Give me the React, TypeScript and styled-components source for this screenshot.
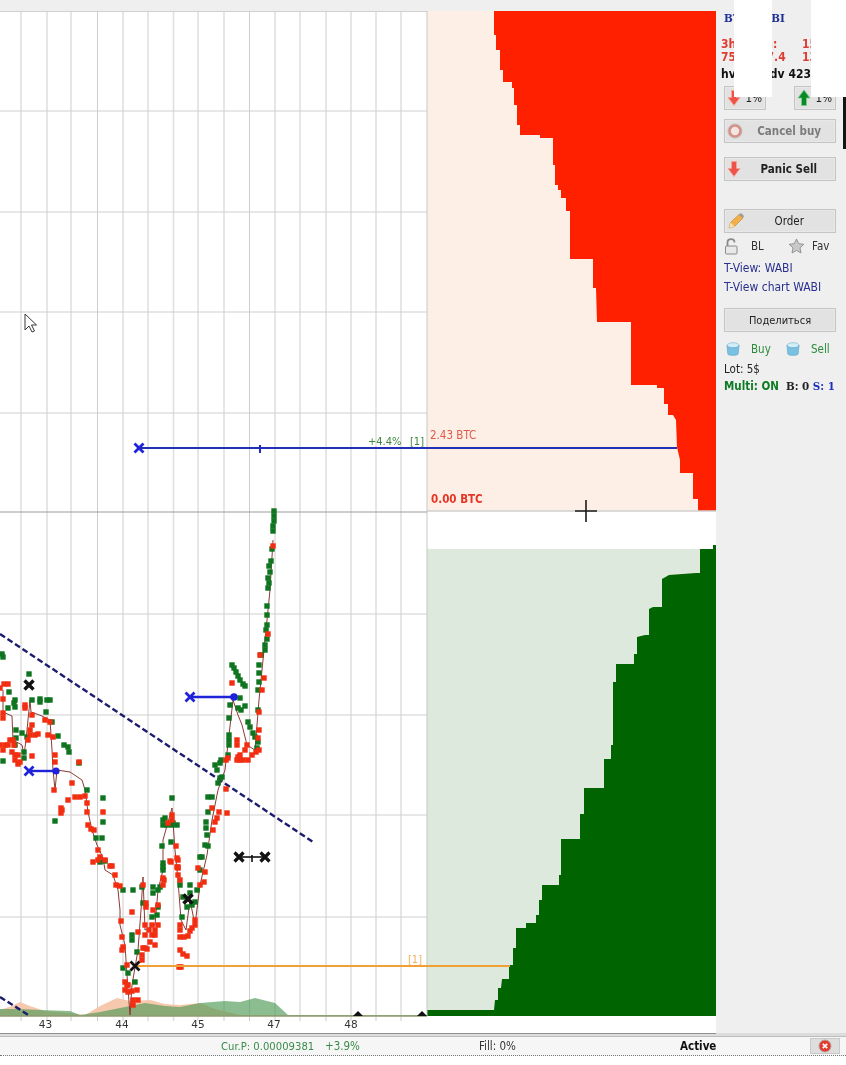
import React from "react";
import styled, { createGlobalStyle } from "styled-components";

const Global = createGlobalStyle`
  html, body { margin: 0; padding: 0; background: #fff; }
  * { box-sizing: border-box; }
`;

const UI = `"DejaVu Sans Condensed", "DejaVu Sans", "Noto Sans", sans-serif`;
const SERIF = `"DejaVu Serif Condensed", "DejaVu Serif", serif`;

const Page = styled.div`
  position: relative;
  width: 846px;
  height: 1065px;
  overflow: hidden;
  display: flex;
  flex-direction: column;
  font-family: ${UI};
  font-size: 11px;
  filter: blur(0.4px);
`;
const Main = styled.div`
  display: flex;
  height: 1033px;
`;
const ChartColumn = styled.div`
  width: 716px;
  display: flex;
  flex-direction: column;
  background: #fff;
`;
const TopStrip = styled.div`
  height: 11px;
  background: #efefef;
`;
const ChartSvg = styled.svg`
  display: block;
  width: 716px;
  height: 1022px;
`;
const Sidebar = styled.aside`
  width: 130px;
  background: #efefef;
  padding: 11px 10px 0 8px;
  display: flex;
  flex-direction: column;
`;
const PairTitle = styled.div`
  color: #1c2f97;
  font: bold 11.5px/14px ${SERIF};
`;
const StatRow = styled.div<{ $color: string; $top: number }>`
  display: flex;
  justify-content: space-between;
  margin: ${(p) => p.$top}px -10px 0 -3px;
  color: ${(p) => p.$color};
  font: bold 12px/13px "DejaVu Sans Condensed", "DejaVu Sans", sans-serif;
  white-space: nowrap;
  overflow: hidden;
`;
const StatRight = styled.span`
  width: 44px;
`;
const NudgeRow = styled.div`
  display: flex;
  justify-content: space-between;
  margin-top: 5px;
`;
const Button = styled.div<{ $top?: number; $w?: number; $bold?: boolean; $color?: string; $pad?: number }>`
  height: 24px;
  width: ${(p) => p.$w ?? 112}px;
  margin-top: ${(p) => p.$top ?? 0}px;
  background: #e2e2e2;
  border: 1px solid #c4c4c4;
  box-shadow: inset 0 0 0 1px #e8e8e8;
  display: flex;
  align-items: center;
  justify-content: space-between;
  padding: 0 ${(p) => p.$pad ?? 14}px 0 2px;
  color: ${(p) => p.$color ?? "#222"};
  font-size: 11.5px;
  font-weight: ${(p) => (p.$bold ? 700 : 400)};
`;
const CenterButton = styled(Button)`
  justify-content: center;
  padding: 0;
  font-size: 11px;
`;
const ToolRow = styled.div<{ $top: number }>`
  display: flex;
  align-items: center;
  height: 16px;
  margin-top: ${(p) => p.$top}px;
  color: #3a3a3a;
`;
const ToolLabel = styled.span<{ $w: number; $color?: string; $indent: number }>`
  width: ${(p) => p.$w}px;
  padding-left: ${(p) => p.$indent}px;
  color: ${(p) => p.$color ?? "#333"};
  font-size: 11.5px;
`;
const IconSlot = styled.span<{ $w: number }>`
  width: ${(p) => p.$w}px;
  display: flex;
  justify-content: center;
`;
const TextLink = styled.div<{ $top: number }>`
  margin-top: ${(p) => p.$top}px;
  color: #29308f;
  line-height: 16px;
  font-size: 12px;
  white-space: nowrap;
`;
const Lot = styled.div`
  margin-top: 4px;
  color: #222;
  line-height: 16px;
  font-size: 11.5px;
`;
const MultiRow = styled.div`
  margin-top: 1px;
  display: flex;
  gap: 7px;
  font: bold 11.5px/16px "DejaVu Sans Condensed", "DejaVu Sans", sans-serif;
  white-space: nowrap;
`;
const SerifGroup = styled.span`
  font-family: ${SERIF};
`;
const Tone = styled.span<{ $c: string }>`
  color: ${(p) => p.$c};
`;
const StatusBar = styled.footer`
  height: 32px;
  background: #fff;
  display: flex;
  flex-direction: column;
`;
const StatusRail = styled.div`
  height: 4px;
  background:
    linear-gradient(#8f8f8f, #8f8f8f) 0 0 / 716px 1px no-repeat,
    linear-gradient(#dcdcdc 0 3px, #bdbdbd 3px);
`;
const StatusRow = styled.div`
  height: 19px;
  display: flex;
  align-items: center;
  padding-left: 221px;
  background: #f6f6f6;
  border-bottom: 1px dotted #777;
`;
const StatusCell = styled.span<{ $w: number; $c?: string; $bold?: boolean; $size?: number }>`
  width: ${(p) => p.$w}px;
  color: ${(p) => p.$c ?? "#333"};
  font-weight: ${(p) => (p.$bold ? 700 : 400)};
  font-size: ${(p) => p.$size ?? 11.5}px;
`;
const CloseBtn = styled.span`
  width: 30px;
  height: 16px;
  background: #dedede;
  border: 1px solid #c9c9c9;
  display: flex;
  align-items: center;
  justify-content: center;
`;
const WhitePatch = styled.div<{ $l: number; $w: number }>`
  position: absolute;
  top: 0;
  left: ${(p) => p.$l}px;
  width: ${(p) => p.$w}px;
  height: 97px;
  background: #fff;
`;
const EdgeSliver = styled.div`
  position: absolute;
  top: 97px;
  left: 843px;
  width: 3px;
  height: 52px;
  background: #141414;
`;

const gridX = [21, 47, 71, 97.5, 123, 148, 173.5, 198, 224, 249.5, 275, 300, 326, 351, 376, 401];
const gridY = [111, 212, 312, 413, 614, 715, 815, 917];

const redSteps =
  "716,11 494,11 494,35 496,35 496,50 500,50 500,70 503,70 503,82 512,82 512,88 514,88 514,105 517,105 517,125 520,125 520,135 540,135 540,138 553,138 553,165 555,165 555,185 558,185 558,190 561,190 561,198 566,198 566,211 570,211 570,259 593,259 593,288 596,288 597,322 631,322 631,385 657,385 657,388 664,388 664,404 668,404 668,415 673,415 676,420 677,447 680,460 680,473 693,473 693,499 698,499 698,511 716,511";
const greenSteps =
  "716,1016 427,1016 427,1010 494,1010 495,1000 498,1000 498,988 501,988 502,979 509,979 509,965 513,965 513,948 516,948 516,928 526,928 526,923 536,923 536,915 539,915 539,900 542,900 542,885 559,885 559,875 561,875 561,839 580,839 580,814 584,814 584,788 604,788 604,759 611,759 611,745 613,745 613,682 616,682 616,664 634,664 634,654 637,654 637,637 645,635 649,635 649,609 653,607 662,607 662,579 669,575 696,573 700,573 700,549 713,549 713,545 716,545";

const peach =
  "0,1016 0,1010 12,1006 20,1002 30,1006 45,1011 70,1013 85,1015 100,1006 117,998 130,1001 150,1000 165,1004 180,1005 200,1003 215,1009 240,1015 427,1016";
const volume =
  "0,1016 0,1009 20,1009 40,1010 70,1011 80,1015 100,1012 125,1007 145,1003 165,1006 180,1007 200,1003 225,1001 240,1002 255,998 275,1003 288,1015 427,1015 427,1016";

const green: number[][] = [
  [274,511],[274,516],[274,521],[273,526],[273,531],[272,549],[271,561],[270,572],[269,566],[268,578],[269,583],[268,588],[267,606],[267,615],[267,625],[266,630],[267,639],[265,645],[265,650],[261,655],[259,665],[259,673],[259,682],[258,690],[258,710],
  [232,665],[234,668],[236,672],[238,676],[240,680],[243,684],[245,686],[240,698],[230,705],[229,718],[238,708],[245,706],[241,710],
  [248,722],[250,727],[253,733],[255,737],[258,742],[257,748],[229,735],[229,740],[229,745],[228,755],[220,763],[217,770],[221,760],[215,765],[220,778],[218,783],[222,777],[212,797],[208,797],[208,812],[206,822],[206,828],[207,835],[205,845],[208,846],[200,857],[202,857],[200,870],
  [2,654],[3,657],[29,674],[9,692],[15,700],[15,707],[8,708],[14,703],[32,700],[40,699],[47,700],[50,700],[40,702],[46,712],[52,722],[58,736],[64,745],[68,747],[69,752],[16,730],[22,733],[27,737],[15,745],[24,752],[24,758],[3,761],[16,738],[79,763],[87,790],[103,798],[55,821],[103,822],[96,838],[102,838],[105,861],[100,862],
  [123,890],[133,890],[142,887],[153,887],[153,893],[158,890],[160,887],[163,863],[163,870],[143,903],[158,907],[157,915],[152,917],[132,935],[132,940],[137,952],[123,968],[128,973],[135,982],
  [180,885],[182,917],[190,885],[190,893],[197,890],[192,905],[187,907],[183,897],[195,902],[172,798],[163,820],[163,825],[167,825],[172,825],[173,823],[177,825],[171,842],[162,846],[163,867],[165,818],
];
const red: number[][] = [
  [273,546],[268,634],[260,655],[264,678],[262,690],[259,712],[259,730],[258,738],[259,750],[237,740],[237,745],[247,745],[245,750],[240,755],[240,760],[238,757],[237,760],[243,760],[248,760],[252,755],[256,752],[226,760],[228,758],[226,789],[219,812],[217,818],[215,822],[213,830],[212,808],[227,813],[232,683],
  [4,684],[0,688],[8,684],[3,699],[3,713],[3,718],[25,705],[25,708],[32,715],[32,725],[45,720],[50,722],[13,740],[30,735],[30,730],[28,740],[35,735],[38,734],[48,735],[53,737],[0,745],[5,745],[3,750],[8,745],[14,745],[10,740],[15,755],[18,755],[12,752],[15,760],[18,764],[20,762],[32,756],[55,755],[55,762],[54,790],[79,762],[72,783],[68,800],[61,808],[62,810],[61,813],[75,797],[80,797],[85,796],[87,803],[87,812],[103,812],[88,825],[91,829],[94,830],[98,850],[100,857],[98,860],[93,862],[105,860],[110,866],
  [112,866],[115,875],[116,885],[120,886],[143,885],[121,921],[122,937],[123,947],[122,950],[127,965],[125,982],[127,985],[125,990],[128,992],[128,985],[137,990],[132,991],[133,1000],[133,1005],[138,1000],[142,960],[145,948],[143,948],[142,955],[147,949],[145,935],[149,930],[152,935],[152,925],[155,930],[145,925],[155,935],[158,925],[150,942],[155,945],[164,880],[163,885],[163,878],[170,861],[178,860],[178,868],[178,875],[180,880],[132,912],[146,903],[146,907],[153,910],[158,905],[138,932],
  [180,925],[180,930],[180,937],[184,937],[188,936],[190,931],[195,925],[195,920],[192,928],[180,950],[183,954],[187,956],[181,967],[179,967],[205,872],[204,882],[200,885],[198,868],
  [172,815],[172,820],[168,823],[176,846],[177,858],[177,867],[178,867],[171,862],
];
const pricePath =
  "3,690 3,712 12,716 13,740 22,745 24,755 26,740 30,700 31,712 42,716 50,720 52,750 53,770 55,790 57,770 70,772 82,780 85,790 88,812 92,830 97,845 103,858 105,870 113,875 118,890 120,910 120,925 125,945 127,975 130,1015 132,985 138,950 141,910 143,877 145,930 155,925 158,890 163,870 163,840 172,808 175,850 178,880 181,920 186,930 190,900 195,925 200,885 207,855 212,820 218,790 225,770 229,735 233,700 238,715 242,725 247,745 255,750 259,700 265,640 270,590 273,540";

const DOT = 5.4;

const Cross = ({ x, y, r, c, w }: { x: number; y: number; r: number; c: string; w: number }) => (
  <path d={`M${x - r} ${y - r}L${x + r} ${y + r}M${x - r} ${y + r}L${x + r} ${y - r}`} stroke={c} strokeWidth={w} />
);

const Chart = () => (
  <ChartSvg viewBox="0 11 716 1022">
    <rect x="0" y="11" width="716" height="1022" fill="#fff" />
    <rect x="427" y="11" width="289" height="500" fill="#fdeee6" />
    <rect x="427" y="549" width="289" height="467" fill="#dde9dd" />
    <polygon points={redSteps} fill="#ff2000" />
    <polygon points={greenSteps} fill="#006500" />
    {gridX.map((x, i) => (
      <line key={x} x1={x} x2={x} y1="11" y2="1021" stroke={i % 2 ? "#cdcdcd" : "#e0e0e0"} strokeWidth={i % 2 ? 1 : 1.6} />
    ))}
    <line x1="427" x2="427" y1="11" y2="1016" stroke="#c2c9c0" strokeWidth="1" />
    {gridY.map((y) => (
      <line key={y} x1="0" x2="427" y1={y} y2={y} stroke="#cfcfcf" strokeWidth="1.2" />
    ))}
    <line x1="0" x2="427" y1="11.5" y2="11.5" stroke="#d0d0d0" />
    <line x1="0" x2="427" y1="512" y2="512" stroke="#9c9c9c" strokeWidth="1.2" />
    <line x1="427" x2="716" y1="511" y2="511" stroke="#cfcfcf" strokeWidth="1.4" />
    <polygon points={peach} fill="#f6c9ae" />
    <polygon points={volume} fill="#4f9a55" fillOpacity="0.65" />
    <line x1="0" x2="427" y1="1016" y2="1016" stroke="#8f9a72" strokeWidth="1.4" />
    <line x1="0" x2="313" y1="634" y2="842" stroke="#1c1c6e" strokeWidth="2.4" strokeDasharray="6 3" />
    <line x1="0" x2="30" y1="997" y2="1016" stroke="#1c1c6e" strokeWidth="2.4" strokeDasharray="6 3" />
    <polyline points={pricePath} fill="none" stroke="#8a3b34" strokeWidth="1" />
    {green.map(([x, y], i) => (
      <rect key={`g${i}`} x={x - DOT / 2} y={y - DOT / 2} width={DOT} height={DOT} fill="#0f7420" />
    ))}
    {red.map(([x, y], i) => (
      <rect key={`r${i}`} x={x - DOT / 2} y={y - DOT / 2} width={DOT} height={DOT} fill="#f22d10" />
    ))}
    <line x1="139" x2="677" y1="448" y2="448" stroke="#2030b8" strokeWidth="2" />
    <line x1="260" x2="260" y1="445" y2="453" stroke="#2030b8" strokeWidth="2" />
    <Cross x={139} y={448} r={4.5} c="#1e22d8" w={2.8} />
    <line x1="190" x2="234" y1="697" y2="697" stroke="#1e22d8" strokeWidth="2.4" />
    <Cross x={190} y={697} r={4.5} c="#1e22d8" w={2.8} />
    <circle cx="234" cy="697" r="3.8" fill="#1e22d8" />
    <line x1="29" x2="56" y1="771" y2="771" stroke="#1e22d8" strokeWidth="2.4" />
    <Cross x={29} y={771} r={4.5} c="#1e22d8" w={2.8} />
    <circle cx="56" cy="771" r="3.6" fill="#1e22d8" />
    <line x1="135" x2="510" y1="966" y2="966" stroke="#f0a035" strokeWidth="2" />
    <Cross x={29} y={685} r={4.5} c="#111" w={3.4} />
    <Cross x={135} y={966} r={4.5} c="#111" w={2.8} />
    <Cross x={188} y={899} r={4.5} c="#111" w={3.6} />
    <line x1="239" x2="265" y1="857" y2="857" stroke="#111" strokeWidth="1.6" />
    <line x1="252" x2="252" y1="855" y2="862" stroke="#111" strokeWidth="1.6" />
    <Cross x={239} y={857} r={4.5} c="#111" w={3.2} />
    <Cross x={265} y={857} r={4.5} c="#111" w={3.2} />
    <polygon points="353,1016 358,1011 363,1016" fill="#111" />
    <polygon points="417,1016 422,1011 427,1016" fill="#111" />
    <g fontFamily={`"DejaVu Sans", sans-serif`} fontSize="10.5" fill="#333" textAnchor="middle">
      <text x="45.5" y="1028">43</text>
      <text x="122" y="1028">44</text>
      <text x="198" y="1028">45</text>
      <text x="274" y="1028">47</text>
      <text x="351" y="1028">48</text>
    </g>
    <g fontFamily={UI} fontSize="11">
      <text x="368" y="445" fill="#3c8c3c">+4.4%</text>
      <text x="410" y="445" fill="#3c8c3c">[1]</text>
      <text x="430" y="439" fill="#dd5a48" fontSize="11.5">2.43 BTC</text>
      <text x="431" y="503" fill="#e53525" fontSize="11.5" fontWeight="700">0.00 BTC</text>
      <text x="408" y="963" fill="#f0b060">[1]</text>
    </g>
    <path d="M575 511H597M586 500V522" stroke="#1c1c1c" strokeWidth="1.6" />
    <path d="M25 314V330L29 326L32 332L34.500 331L31.500 325H36.500Z" fill="#fff" stroke="#222" strokeWidth="0.9" />
  </ChartSvg>
);

const DownArrow = () => (
  <svg width="14" height="18" viewBox="0 0 14 18">
    <path d="M4.500 1.500H9.500V8.500H13L7 16.500L1 8.500H4.500Z" fill="#ee5348" stroke="#f6a39b" strokeWidth="1" />
  </svg>
);
const UpArrow = () => (
  <svg width="14" height="18" viewBox="0 0 14 18">
    <path d="M7 1L13 9H9.500V16.500H4.500V9H1Z" fill="#0a8a24" stroke="#7ccb8c" strokeWidth="0.8" />
  </svg>
);
const RingIcon = () => (
  <svg width="16" height="16" viewBox="0 0 16 16">
    <circle cx="8" cy="8" r="5.500" fill="#f2e6e2" stroke="#d98f86" strokeWidth="2.600" />
    <circle cx="8" cy="8" r="7" fill="none" stroke="#b9b1ae" strokeWidth="0.8" />
  </svg>
);
const PencilIcon = () => (
  <svg width="18" height="18" viewBox="0 0 18 18">
    <path d="M2 16L3.500 10.500L12 2.500L16 6L7.500 14.500Z" fill="#f0b04a" stroke="#c98a2c" strokeWidth="0.7" />
    <path d="M12 2.500L14 1L17 4L16 6Z" fill="#9a9a9a" />
    <path d="M2 16L3.500 10.500L7.500 14.500Z" fill="#f6e0b8" />
  </svg>
);
const LockIcon = () => (
  <svg width="15" height="17" viewBox="0 0 15 17">
    <path d="M3.500 8V4.500C3.500 2.600 5 1.200 7 1.200S10.500 2.600 10.500 4.500" fill="none" stroke="#8a8a8a" strokeWidth="1.800" />
    <rect x="1.500" y="8" width="11.500" height="8" rx="1" fill="#e8e8e8" stroke="#8a8a8a" strokeWidth="1" />
  </svg>
);
const StarIcon = () => (
  <svg width="17" height="16" viewBox="0 0 17 16">
    <path d="M8.500 1L10.700 5.700L15.800 6.300L12 9.800L13 15L8.500 12.400L4 15L5 9.800L1.200 6.300L6.300 5.700Z" fill="#c9c9c9" stroke="#8d8d8d" strokeWidth="0.9" />
  </svg>
);
const JarIcon = () => (
  <svg width="16" height="15" viewBox="0 0 16 15">
    <ellipse cx="8" cy="3.500" rx="6" ry="2.800" fill="#d2eef8" stroke="#7fb8d2" strokeWidth="0.7" />
    <path d="M2 3.500L2.800 12C3 13.800 13 13.800 13.200 12L14 3.500C13 6.500 3 6.500 2 3.500Z" fill="#79c1e2" stroke="#6aa9c8" strokeWidth="0.7" />
  </svg>
);
const CloseIcon = () => (
  <svg width="14" height="14" viewBox="0 0 14 14">
    <circle cx="7" cy="7" r="6" fill="#e23b2e" stroke="#b9a09c" strokeWidth="1" />
    <path d="M4.800 4.800L9.200 9.200M9.200 4.800L4.800 9.200" stroke="#fff" strokeWidth="1.700" />
  </svg>
);

export default function App() {
  return (
    <Page>
      <Global />
      <Main>
        <ChartColumn>
          <TopStrip />
          <Chart />
        </ChartColumn>
        <Sidebar>
          <PairTitle>BTC-WABI</PairTitle>
          <StatRow $color="#dd3d30" $top={13}>
            <span>3h Mean:</span>
            <StatRight>15</StatRight>
          </StatRow>
          <StatRow $color="#dd3d30" $top={0}>
            <span>75.4 / 57.4</span>
            <StatRight>13</StatRight>
          </StatRow>
          <StatRow $color="#111" $top={4}>
            <span>hv 12.5 dv 423</span>
          </StatRow>
          <NudgeRow>
            <Button $w={42} $pad={3}>
              <DownArrow />
              1%
            </Button>
            <Button $w={42} $pad={3}>
              <UpArrow />
              1%
            </Button>
          </NudgeRow>
          <Button $top={9} $bold $color="#7b7b7b" $pad={14}>
            <RingIcon />
            Cancel buy
          </Button>
          <Button $top={14} $bold $pad={18}>
            <DownArrow />
            Panic Sell
          </Button>
          <Button $top={28} $pad={31}>
            <PencilIcon />
            Order
          </Button>
          <ToolRow $top={5}>
            <IconSlot $w={15}><LockIcon /></IconSlot>
            <ToolLabel $w={49} $indent={12}>BL</ToolLabel>
            <IconSlot $w={17}><StarIcon /></IconSlot>
            <ToolLabel $w={30} $indent={7}>Fav</ToolLabel>
          </ToolRow>
          <TextLink $top={6}>T-View: WABI</TextLink>
          <TextLink $top={3}>T-View chart WABI</TextLink>
          <CenterButton $top={13}>Поделиться</CenterButton>
          <ToolRow $top={9}>
            <IconSlot $w={18}><JarIcon /></IconSlot>
            <ToolLabel $w={42} $indent={9} $color="#2b8a3a">Buy</ToolLabel>
            <IconSlot $w={18}><JarIcon /></IconSlot>
            <ToolLabel $w={34} $indent={9} $color="#2b8a3a">Sell</ToolLabel>
          </ToolRow>
          <Lot>Lot: 5$</Lot>
          <MultiRow>
            <Tone $c="#0d7a24">Multi: ON</Tone>
            <SerifGroup>
              <Tone $c="#222">B: 0 </Tone>
              <Tone $c="#1c2fb8">S: 1</Tone>
            </SerifGroup>
          </MultiRow>
        </Sidebar>
      </Main>
      <StatusBar>
        <StatusRail />
        <StatusRow>
          <StatusCell $w={104} $c="#3a8c4a" $size={11.2}>Cur.P: 0.00009381</StatusCell>
          <StatusCell $w={154} $c="#3a8c4a">+3.9%</StatusCell>
          <StatusCell $w={201}>Fill: 0%</StatusCell>
          <StatusCell $w={130} $bold $c="#111">Active</StatusCell>
          <CloseBtn><CloseIcon /></CloseBtn>
        </StatusRow>
      </StatusBar>
      <WhitePatch $l={734} $w={38} />
      <WhitePatch $l={811} $w={35} />
      <EdgeSliver />
    </Page>
  );
}
